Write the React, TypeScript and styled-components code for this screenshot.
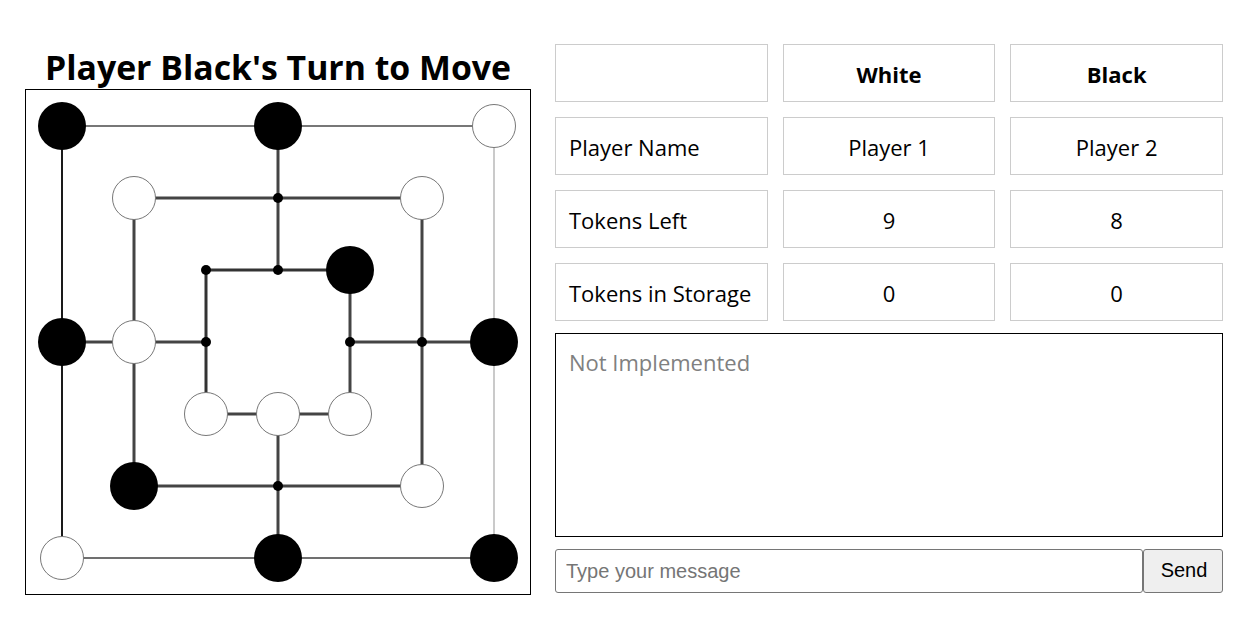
import * as React from "react";
import styled, { createGlobalStyle } from "styled-components";

const GlobalStyle = createGlobalStyle`
  body {
    margin: 0;
    background: #fff;
    color: #000;
    font-family: "Open Sans", "Noto Sans", sans-serif;
  }
`;

const CELL = 72;
const HALF = 36;

type Stone = "white" | "black" | "empty";

// [col, row, stone] on a 7x7 grid
const points: [number, number, Stone][] = [
  [0, 0, "black"], [3, 0, "black"], [6, 0, "white"],
  [0, 3, "black"], [6, 3, "black"],
  [0, 6, "white"], [3, 6, "black"], [6, 6, "black"],
  [1, 1, "white"], [3, 1, "empty"], [5, 1, "white"],
  [1, 3, "white"], [5, 3, "empty"],
  [1, 5, "black"], [3, 5, "empty"], [5, 5, "white"],
  [2, 2, "empty"], [3, 2, "empty"], [4, 2, "black"],
  [2, 3, "empty"], [4, 3, "empty"],
  [2, 4, "white"], [3, 4, "white"], [4, 4, "white"],
];

// [c1, r1, c2, r2, colour, width]
const lines: [number, number, number, number, string, number][] = [
  [0, 0, 6, 0, "#4a4a4a", 1.6],
  [0, 0, 0, 6, "#1a1a1a", 2],
  [6, 0, 6, 6, "#b8b8b8", 1.5],
  [0, 6, 6, 6, "#707070", 2],
  [1, 1, 5, 1, "#444", 3],
  [1, 1, 1, 5, "#444", 3],
  [5, 1, 5, 5, "#444", 3],
  [1, 5, 5, 5, "#444", 3],
  [2, 2, 4, 2, "#333", 3],
  [2, 2, 2, 4, "#333", 3],
  [4, 2, 4, 4, "#444", 3],
  [2, 4, 4, 4, "#444", 3],
  [3, 0, 3, 2, "#444", 3],
  [3, 4, 3, 6, "#444", 3],
  [0, 3, 2, 3, "#444", 3],
  [4, 3, 6, 3, "#444", 3],
];

const pos = (n: number) => HALF + CELL * n;

const Page = styled.div`
  display: flex;
  gap: 24px;
  padding: 44px 0 0 25px;
`;

const GameColumn = styled.div`
  display: flex;
  flex-direction: column;
  width: 506px;
`;

const Title = styled.h1`
  margin: 1px 0 0;
  height: 44px;
  line-height: 44px;
  font-size: 33.8px;
  font-weight: 700;
  text-align: center;
  white-space: nowrap;
`;

const BoardFrame = styled.div`
  width: 504px;
  height: 504px;
  border: 1px solid #000;

  svg {
    display: block;
  }
`;

const SidePanel = styled.div`
  display: flex;
  flex-direction: column;
  width: 668px;
`;

const StatsGrid = styled.div`
  display: grid;
  grid-template-columns: repeat(3, 1fr);
  grid-auto-rows: 58px;
  gap: 15px;
`;

const Cell = styled.div<{ $align?: "left" | "center"; $bold?: boolean }>`
  display: flex;
  align-items: center;
  justify-content: ${props => (props.$align === "left" ? "flex-start" : "center")};
  padding: 2px 13px 0;
  border: 1px solid #cccccc;
  font-size: 22px;
  font-weight: ${props => (props.$bold ? 700 : 400)};
  white-space: nowrap;
`;

const ChatLog = styled.textarea`
  margin-top: 12px;
  height: 204px;
  box-sizing: border-box;
  border: 1px solid #000;
  padding: 13px 13px;
  resize: none;
  font-family: "Open Sans", "Noto Sans", sans-serif;
  font-size: 22px;
  outline: none;

  &::placeholder {
    color: #808080;
  }
`;

const ChatForm = styled.div`
  display: flex;
  margin-top: 12px;
  height: 44px;
`;

const MessageInput = styled.input`
  flex: 1;
  box-sizing: border-box;
  border: 1px solid #767676;
  border-radius: 3px;
  padding: 0 10px;
  font-family: "Liberation Sans", Arial, sans-serif;
  font-size: 20px;

  &::placeholder {
    color: #757575;
  }
`;

const SendButton = styled.button`
  width: 80px;
  box-sizing: border-box;
  border: 1px solid #767676;
  border-radius: 3px;
  background: #efefef;
  color: #000;
  font-family: "Liberation Sans", Arial, sans-serif;
  font-size: 20px;
  padding: 0 0 2px 2px;
`;

const Board = () => (
  <svg width={504} height={504} viewBox="0 0 504 504">
    {lines.map(([c1, r1, c2, r2, colour, w], i) => (
      <line
        key={i}
        x1={pos(c1)}
        y1={pos(r1)}
        x2={pos(c2)}
        y2={pos(r2)}
        stroke={colour}
        strokeWidth={w}
      />
    ))}
    {points.map(([c, r, stone]) => {
      const key = `${c}-${r}`;
      if (stone === "black") return <circle key={key} cx={pos(c)} cy={pos(r)} r={24} fill="#000" />;
      if (stone === "white")
        return <circle key={key} cx={pos(c)} cy={pos(r)} r={21.5} fill="#fff" stroke="#777" strokeWidth={1} />;
      return <circle key={key} cx={pos(c)} cy={pos(r)} r={5} fill="#000" />;
    })}
  </svg>
);

const rows = [
  ["Player Name", "Player 1", "Player 2"],
  ["Tokens Left", "9", "8"],
  ["Tokens in Storage", "0", "0"],
];

export default function App() {
  return (
    <>
      <GlobalStyle />
      <Page>
        <GameColumn>
          <Title>Player Black's Turn to Move</Title>
          <BoardFrame>
            <Board />
          </BoardFrame>
        </GameColumn>
        <SidePanel>
          <StatsGrid>
            <Cell />
            <Cell $bold>White</Cell>
            <Cell $bold>Black</Cell>
            {rows.map(([label, white, black]) => (
              <React.Fragment key={label}>
                <Cell $align="left">{label}</Cell>
                <Cell>{white}</Cell>
                <Cell>{black}</Cell>
              </React.Fragment>
            ))}
          </StatsGrid>
          <ChatLog placeholder="Not Implemented" readOnly />
          <ChatForm>
            <MessageInput placeholder="Type your message" />
            <SendButton>Send</SendButton>
          </ChatForm>
        </SidePanel>
      </Page>
    </>
  );
}
